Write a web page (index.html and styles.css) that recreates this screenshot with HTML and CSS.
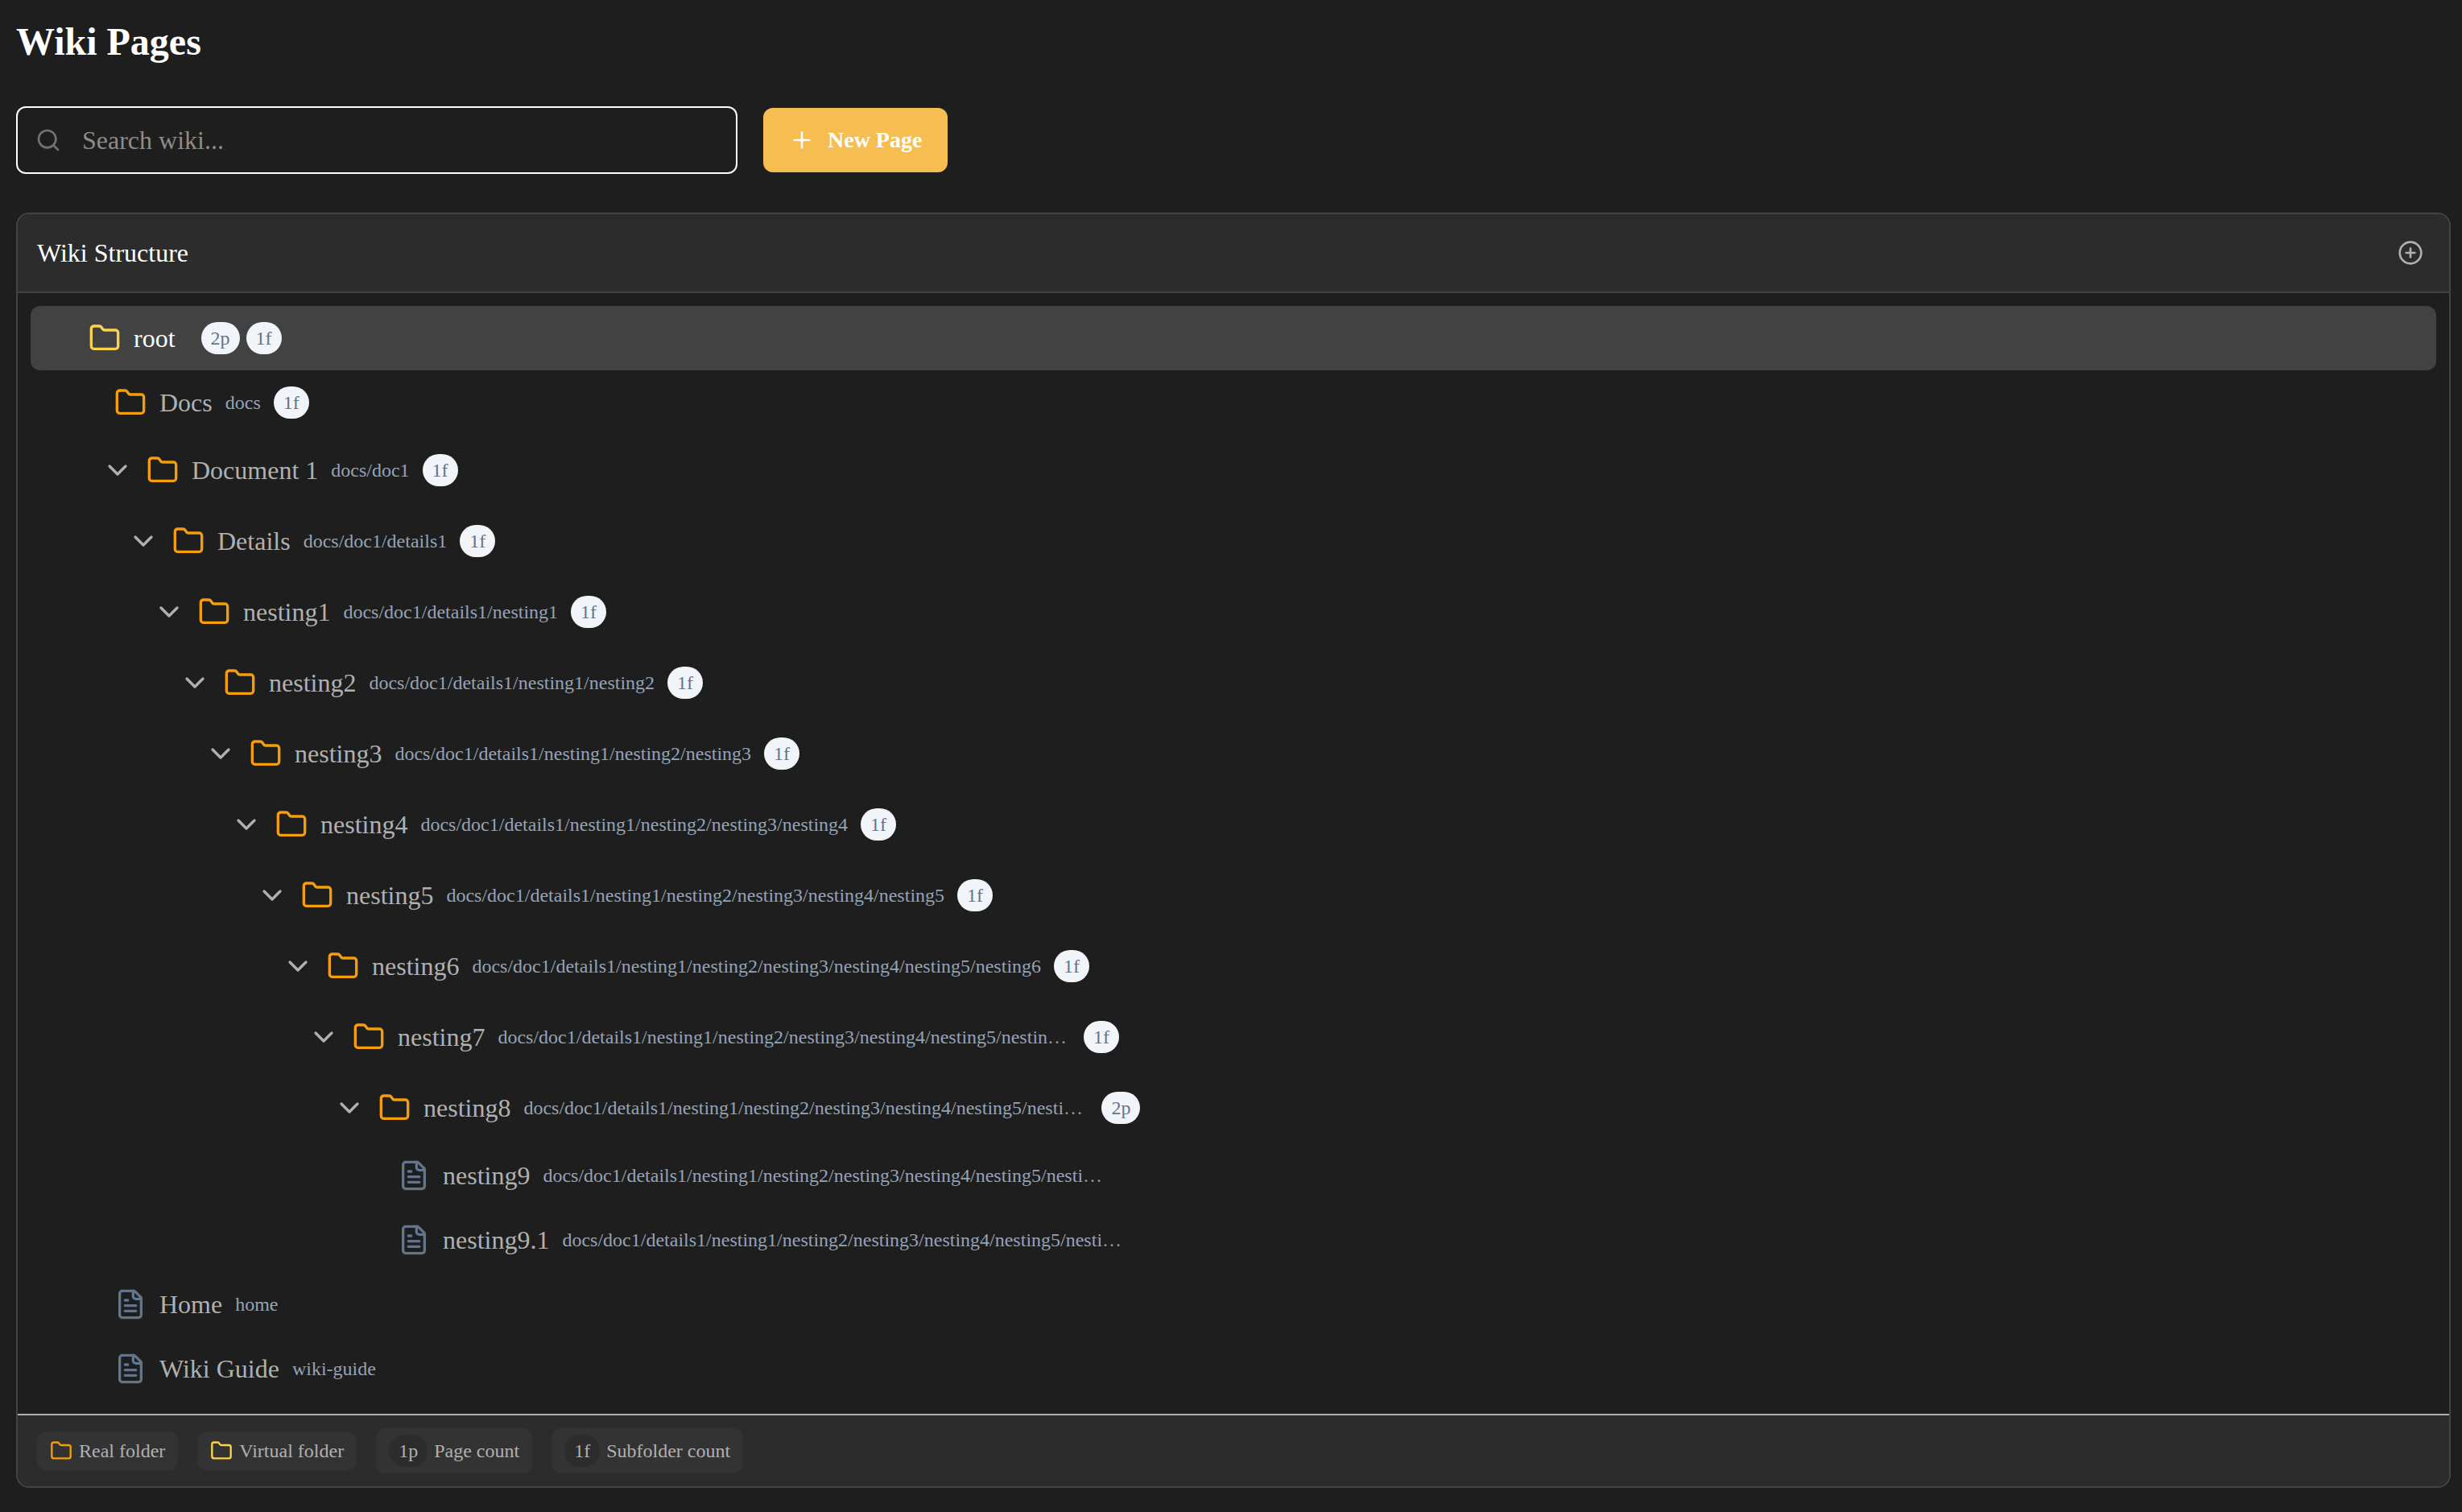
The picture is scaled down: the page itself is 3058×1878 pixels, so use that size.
FILE: index.html
```html
<!DOCTYPE html>
<html lang="en">
<head>
<meta charset="utf-8">
<meta name="viewport" content="width=device-width, initial-scale=1">
<title>Wiki Pages</title>
<link rel="stylesheet" href="styles.css">
</head>
<body>
<svg class="sprite" aria-hidden="true">
  <symbol id="i-folder" viewBox="0 0 24 24"><path d="M4 20h16a2 2 0 0 0 2-2V8a2 2 0 0 0-2-2h-7.93a2 2 0 0 1-1.66-.9l-.82-1.2A2 2 0 0 0 7.93 3H4a2 2 0 0 0-2 2v13c0 1.1.9 2 2 2Z"/></symbol>
  <symbol id="i-file" viewBox="0 0 24 24"><path d="M15 2H6a2 2 0 0 0-2 2v16a2 2 0 0 0 2 2h12a2 2 0 0 0 2-2V7Z"/><path d="M14 2v4a2 2 0 0 0 2 2h4"/><path d="M10 9H8"/><path d="M16 13H8"/><path d="M16 17H8"/></symbol>
  <symbol id="i-chevron" viewBox="0 0 24 24"><path d="m6 9 6 6 6-6"/></symbol>
  <symbol id="i-search" viewBox="0 0 24 24"><circle cx="11" cy="11" r="8"/><path d="m21 21-4.3-4.3"/></symbol>
  <symbol id="i-plus" viewBox="0 0 24 24"><path d="M5 12h14"/><path d="M12 5v14"/></symbol>
  <symbol id="i-plus-circle" viewBox="0 0 24 24"><circle cx="12" cy="12" r="10"/><path d="M8 12h8"/><path d="M12 8v8"/></symbol>
</svg>

<main class="page">
  <h1 class="page-title">Wiki Pages</h1>

  <div class="toolbar">
    <label class="search">
      <svg class="icon icon-md search-icon" aria-hidden="true"><use href="#i-search"/></svg>
      <input class="search-input" type="text" placeholder="Search wiki..." aria-label="Search wiki">
    </label>
    <button class="btn-primary" type="button">
      <svg class="icon icon-md" aria-hidden="true"><use href="#i-plus"/></svg>
      <span>New Page</span>
    </button>
  </div>

  <section class="panel">
    <header class="panel-header">
      <h2 class="panel-title">Wiki Structure</h2>
      <button class="icon-btn" type="button" aria-label="Add page">
        <svg class="icon icon-md" aria-hidden="true"><use href="#i-plus-circle"/></svg>
      </button>
    </header>

    <ul class="tree">
      <li>
        <div class="row row-selected">
          <span class="spacer"></span>
          <svg class="icon icon-lg virtual" aria-hidden="true"><use href="#i-folder"/></svg>
          <div class="label"><a class="name" href="#">root</a><span class="path"></span><span class="badges"><span class="badge">2p</span><span class="badge">1f</span></span></div>
        </div>
        <ul>
          <li>
            <div class="row">
              <span class="spacer"></span>
              <svg class="icon icon-lg real" aria-hidden="true"><use href="#i-folder"/></svg>
              <div class="label"><a class="name" href="#docs">Docs</a><span class="path">docs</span><span class="badge">1f</span></div>
            </div>
            <ul>
              <li>
                <div class="row">
                  <button class="icon-btn" type="button" aria-label="Collapse Document 1"><svg class="icon icon-lg" aria-hidden="true"><use href="#i-chevron"/></svg></button>
                  <svg class="icon icon-lg real" aria-hidden="true"><use href="#i-folder"/></svg>
                  <div class="label"><a class="name" href="#doc1">Document 1</a><span class="path">docs/doc1</span><span class="badge">1f</span></div>
                </div>
                <ul>
                  <li>
                    <div class="row">
                      <button class="icon-btn" type="button" aria-label="Collapse Details"><svg class="icon icon-lg" aria-hidden="true"><use href="#i-chevron"/></svg></button>
                      <svg class="icon icon-lg real" aria-hidden="true"><use href="#i-folder"/></svg>
                      <div class="label"><a class="name" href="#details1">Details</a><span class="path">docs/doc1/details1</span><span class="badge">1f</span></div>
                    </div>
                    <ul>
                      <li>
                        <div class="row">
                          <button class="icon-btn" type="button" aria-label="Collapse nesting1"><svg class="icon icon-lg" aria-hidden="true"><use href="#i-chevron"/></svg></button>
                          <svg class="icon icon-lg real" aria-hidden="true"><use href="#i-folder"/></svg>
                          <div class="label"><a class="name" href="#nesting1">nesting1</a><span class="path">docs/doc1/details1/nesting1</span><span class="badge">1f</span></div>
                        </div>
                        <ul>
                          <li>
                            <div class="row">
                              <button class="icon-btn" type="button" aria-label="Collapse nesting2"><svg class="icon icon-lg" aria-hidden="true"><use href="#i-chevron"/></svg></button>
                              <svg class="icon icon-lg real" aria-hidden="true"><use href="#i-folder"/></svg>
                              <div class="label"><a class="name" href="#nesting2">nesting2</a><span class="path">docs/doc1/details1/nesting1/nesting2</span><span class="badge">1f</span></div>
                            </div>
                            <ul>
                              <li>
                                <div class="row">
                                  <button class="icon-btn" type="button" aria-label="Collapse nesting3"><svg class="icon icon-lg" aria-hidden="true"><use href="#i-chevron"/></svg></button>
                                  <svg class="icon icon-lg real" aria-hidden="true"><use href="#i-folder"/></svg>
                                  <div class="label"><a class="name" href="#nesting3">nesting3</a><span class="path">docs/doc1/details1/nesting1/nesting2/nesting3</span><span class="badge">1f</span></div>
                                </div>
                                <ul>
                                  <li>
                                    <div class="row">
                                      <button class="icon-btn" type="button" aria-label="Collapse nesting4"><svg class="icon icon-lg" aria-hidden="true"><use href="#i-chevron"/></svg></button>
                                      <svg class="icon icon-lg real" aria-hidden="true"><use href="#i-folder"/></svg>
                                      <div class="label"><a class="name" href="#nesting4">nesting4</a><span class="path">docs/doc1/details1/nesting1/nesting2/nesting3/nesting4</span><span class="badge">1f</span></div>
                                    </div>
                                    <ul>
                                      <li>
                                        <div class="row">
                                          <button class="icon-btn" type="button" aria-label="Collapse nesting5"><svg class="icon icon-lg" aria-hidden="true"><use href="#i-chevron"/></svg></button>
                                          <svg class="icon icon-lg real" aria-hidden="true"><use href="#i-folder"/></svg>
                                          <div class="label"><a class="name" href="#nesting5">nesting5</a><span class="path">docs/doc1/details1/nesting1/nesting2/nesting3/nesting4/nesting5</span><span class="badge">1f</span></div>
                                        </div>
                                        <ul>
                                          <li>
                                            <div class="row">
                                              <button class="icon-btn" type="button" aria-label="Collapse nesting6"><svg class="icon icon-lg" aria-hidden="true"><use href="#i-chevron"/></svg></button>
                                              <svg class="icon icon-lg real" aria-hidden="true"><use href="#i-folder"/></svg>
                                              <div class="label"><a class="name" href="#nesting6">nesting6</a><span class="path">docs/doc1/details1/nesting1/nesting2/nesting3/nesting4/nesting5/nesting6</span><span class="badge">1f</span></div>
                                            </div>
                                            <ul>
                                              <li>
                                                <div class="row">
                                                  <button class="icon-btn" type="button" aria-label="Collapse nesting7"><svg class="icon icon-lg" aria-hidden="true"><use href="#i-chevron"/></svg></button>
                                                  <svg class="icon icon-lg real" aria-hidden="true"><use href="#i-folder"/></svg>
                                                  <div class="label"><a class="name" href="#nesting7">nesting7</a><span class="path">docs/doc1/details1/nesting1/nesting2/nesting3/nesting4/nesting5/nesting6/nesting7</span><span class="badge">1f</span></div>
                                                </div>
                                                <ul>
                                                  <li>
                                                    <div class="row">
                                                      <button class="icon-btn" type="button" aria-label="Collapse nesting8"><svg class="icon icon-lg" aria-hidden="true"><use href="#i-chevron"/></svg></button>
                                                      <svg class="icon icon-lg real" aria-hidden="true"><use href="#i-folder"/></svg>
                                                      <div class="label"><a class="name" href="#nesting8">nesting8</a><span class="path">docs/doc1/details1/nesting1/nesting2/nesting3/nesting4/nesting5/nesting6/nesting7/nesting8</span><span class="badge">2p</span></div>
                                                    </div>
                                                    <ul>
                                                      <li>
                                                        <div class="row">
                                                          <span class="spacer"></span>
                                                          <svg class="icon icon-lg file" aria-hidden="true"><use href="#i-file"/></svg>
                                                          <div class="label"><a class="name" href="#nesting9">nesting9</a><span class="path">docs/doc1/details1/nesting1/nesting2/nesting3/nesting4/nesting5/nesting6/nesting7/nesting8/nesting9</span></div>
                                                        </div>
                                                      </li>
                                                      <li>
                                                        <div class="row">
                                                          <span class="spacer"></span>
                                                          <svg class="icon icon-lg file" aria-hidden="true"><use href="#i-file"/></svg>
                                                          <div class="label"><a class="name" href="#nesting9-1">nesting9.1</a><span class="path">docs/doc1/details1/nesting1/nesting2/nesting3/nesting4/nesting5/nesting6/nesting7/nesting8/nesting9.1</span></div>
                                                        </div>
                                                      </li>
                                                    </ul>
                                                  </li>
                                                </ul>
                                              </li>
                                            </ul>
                                          </li>
                                        </ul>
                                      </li>
                                    </ul>
                                  </li>
                                </ul>
                              </li>
                            </ul>
                          </li>
                        </ul>
                      </li>
                    </ul>
                  </li>
                </ul>
              </li>
            </ul>
          </li>
          <li>
            <div class="row">
              <span class="spacer"></span>
              <svg class="icon icon-lg file" aria-hidden="true"><use href="#i-file"/></svg>
              <div class="label"><a class="name" href="#home">Home</a><span class="path">home</span></div>
            </div>
          </li>
          <li>
            <div class="row">
              <span class="spacer"></span>
              <svg class="icon icon-lg file" aria-hidden="true"><use href="#i-file"/></svg>
              <div class="label"><a class="name" href="#wiki-guide">Wiki Guide</a><span class="path">wiki-guide</span></div>
            </div>
          </li>
        </ul>
      </li>
    </ul>

    <footer class="legend">
      <div class="chip"><svg class="icon icon-sm real" aria-hidden="true"><use href="#i-folder"/></svg><span>Real folder</span></div>
      <div class="chip"><svg class="icon icon-sm virtual" aria-hidden="true"><use href="#i-folder"/></svg><span>Virtual folder</span></div>
      <div class="chip"><span class="badge badge-dark">1p</span><span>Page count</span></div>
      <div class="chip"><span class="badge badge-dark">1f</span><span>Subfolder count</span></div>
    </footer>
  </section>
</main>
</body>
</html>
```
FILE: styles.css
```css
:root {
  --bg: #1e1e1e;
  --surface: #2c2c2c;
  --chip: #333333;
  --border: #444444;
  --selected: #424242;
  --text: #ffffff;
  --muted: #b0b0b0;
  --path: #94a3b8;
  --slate: #64748b;
  --badge: #f1f5f9;
  --real: #f59e0b;
  --virtual: #fcd34d;
  --accent: #f6bd50;
}

*,
*::before,
*::after {
  box-sizing: border-box;
}

body {
  margin: 0;
  background: var(--bg);
  color: var(--text);
  font-family: "Liberation Serif", "Times New Roman", serif;
  font-size: 32px;
  line-height: 48px;
}

h1,
h2,
ul {
  margin: 0;
  padding: 0;
}

ul {
  list-style: none;
}

button,
input {
  font: inherit;
  color: inherit;
}

.sprite {
  display: none;
}

.icon {
  display: block;
  flex: none;
  fill: none;
  stroke: currentColor;
  stroke-width: 2;
  stroke-linecap: round;
  stroke-linejoin: round;
}

.icon-sm {
  width: 28px;
  height: 28px;
}

.icon-md {
  width: 32px;
  height: 32px;
}

.icon-lg {
  width: 40px;
  height: 40px;
}

.real {
  color: var(--real);
}

.virtual {
  color: var(--virtual);
}

.file {
  color: var(--slate);
}

.page {
  display: flex;
  flex-direction: column;
  gap: 48px;
  padding: 20px 14px 30px 20px;
}

.page-title {
  font-size: 48px;
  font-weight: 700;
  line-height: 64px;
}

.toolbar {
  display: flex;
  align-items: center;
  gap: 32px;
}

.search {
  display: flex;
  align-items: center;
  gap: 26px;
  width: 100%;
  max-width: 896px;
  height: 84px;
  padding: 0 22px;
  border: 2px solid #ffffff;
  border-radius: 12px;
}

.search-icon {
  color: #71717a;
}

.search-input {
  flex: 1;
  min-width: 0;
  padding: 0;
  border: 0;
  outline: 0;
  background: transparent;
}

.search-input::placeholder {
  color: #8c8c8c;
  opacity: 1;
}

.btn-primary {
  display: flex;
  flex: none;
  align-items: center;
  gap: 16px;
  height: 80px;
  padding: 0 32px;
  border: 0;
  border-radius: 12px;
  background: var(--accent);
  font-size: 28px;
  font-weight: 700;
  line-height: 40px;
}

.icon-btn {
  flex: none;
  padding: 8px;
  border: 0;
  background: none;
  color: var(--muted);
}

.panel {
  overflow: hidden;
  border: 2px solid var(--border);
  border-radius: 16px;
}

.panel-header {
  display: flex;
  align-items: center;
  justify-content: space-between;
  padding: 24px;
  border-bottom: 2px solid var(--border);
  background: var(--surface);
}

.panel-title {
  font-size: 32px;
  font-weight: 400;
}

.tree {
  padding: 16px;
}

.tree ul {
  padding-left: 32px;
}

.row {
  display: flex;
  align-items: center;
  gap: 8px;
  padding: 16px 160px 16px 16px;
  border-radius: 12px;
  color: var(--muted);
}

.row-selected {
  background: var(--selected);
  color: var(--text);
}

.spacer {
  flex: none;
  width: 48px;
}

.label {
  display: flex;
  flex: 1;
  align-items: center;
  gap: 16px;
  min-width: 0;
  margin-left: 8px;
}

.name {
  color: inherit;
  text-decoration: none;
  white-space: nowrap;
}

.path {
  overflow: hidden;
  max-width: 30%;
  color: var(--path);
  font-size: 24px;
  line-height: 32px;
  text-overflow: ellipsis;
  white-space: nowrap;
}

.badges {
  display: flex;
  gap: 8px;
}

.badge {
  flex: none;
  padding: 4px 12px;
  border-radius: 20px;
  background: var(--badge);
  color: var(--slate);
  font-size: 24px;
  line-height: 32px;
}

.badge-dark {
  background: var(--surface);
  color: inherit;
}

.legend {
  display: flex;
  flex-wrap: wrap;
  align-items: center;
  gap: 24px;
  padding: 16px 24px;
  border-top: 2px solid var(--muted);
  background: var(--surface);
  color: var(--muted);
  font-size: 24px;
  line-height: 32px;
}

.chip {
  display: flex;
  align-items: center;
  gap: 8px;
  padding: 8px 16px;
  border-radius: 12px;
  background: var(--chip);
}
```
